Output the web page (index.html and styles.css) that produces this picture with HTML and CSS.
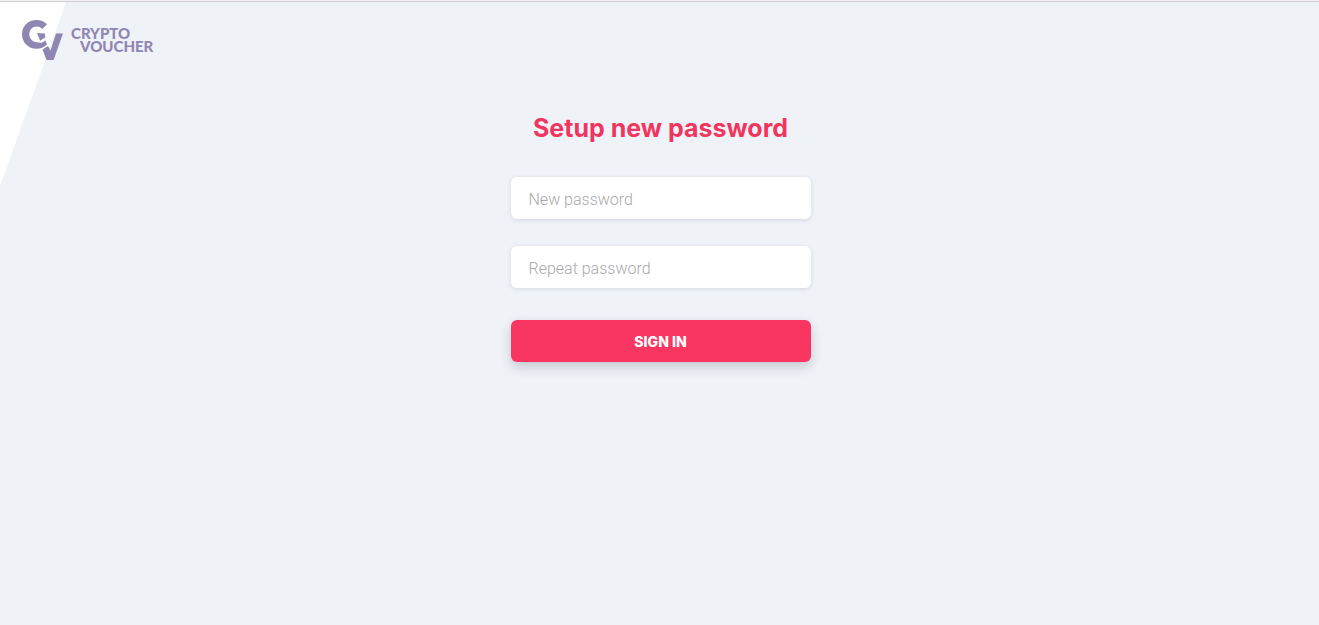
FILE: index.html
```html
<!DOCTYPE html>
<html lang="en">
<head>
<meta charset="utf-8">
<title>Crypto Voucher</title>
<meta name="viewport" content="width=device-width, initial-scale=1">
<link rel="stylesheet" href="styles.css">
</head>
<body>
<header class="header">
  <a class="brand" href="#" aria-label="Crypto Voucher">
    <svg class="brand-mark" viewBox="0 0 42 42" aria-hidden="true">
      <path d="M25 4.200C22.400 1.500 18.800 0 14.500 0C6.200 0 0 6 0 14.300C0 22.600 6.200 28.800 14.300 28.800C18.500 28.800 22.200 27.300 25 24.500L23.300 20.300L20.500 22.500C18.800 22.900 17 22.700 15 22.300C10.500 21.800 7.300 18.700 7.300 14.300C7.300 9.700 10.400 6.500 14.700 6.500C17 6.500 18.800 7.300 20.300 9Z"/>
      <path d="M15 13L22.800 13.500L23.400 17.200L18.200 20.800Z"/>
      <path d="M20.500 29.500L26 26L28.500 30.500L34 13.500H41L31.600 40H24.500Z"/>
    </svg>
    <span class="brand-name"><span>CRYPTO</span><span class="brand-second">VOUCHER</span></span>
  </a>
</header>
<main class="main">
  <form class="form">
    <h1 class="title">Setup new password</h1>
    <input class="field" type="password" placeholder="New password" aria-label="New password">
    <input class="field" type="password" placeholder="Repeat password" aria-label="Repeat password">
    <button class="submit" type="submit">SIGN IN</button>
  </form>
</main>
</body>
</html>
```
FILE: styles.css
```css
* {
  box-sizing: border-box;
}

body {
  margin: 0;
  min-height: 100vh;
  border-top: 1px solid #f3f1f3;
  background: #eff3f8;
  font-family: Inter, "Liberation Sans", sans-serif;
}

.header {
  height: 100px;
  padding: 18px 22px;
  border-top: 1px solid #cfcdd3;
}

.header::before {
  content: "";
  position: absolute;
  z-index: -1;
  top: 2px;
  left: 0;
  width: 66px;
  height: 184px;
  background: #fff;
  clip-path: polygon(0 0, 100% 0, 0 100%);
}

.brand {
  display: inline-flex;
  gap: 7px;
  color: #8f86b2;
  text-decoration: none;
}

.brand-mark {
  width: 42px;
  height: 42px;
  fill: currentColor;
}

.brand-name {
  display: flex;
  flex-direction: column;
  padding-top: 7px;
  font: 900 15px/13px Lato, sans-serif;
}

.brand-second {
  padding-left: 9px;
}

.main {
  display: flex;
  justify-content: center;
  padding: 9px 16px 32px 18px;
}

.form {
  display: flex;
  flex-direction: column;
  width: 300px;
}

.title {
  margin: 0 0 31px;
  color: #f0365f;
  font-size: 25px;
  line-height: 36px;
  text-align: center;
  white-space: nowrap;
}

.field {
  height: 42px;
  margin-bottom: 27px;
  padding: 3px 18px 0;
  border: 0;
  border-radius: 6px;
  background: #fff;
  box-shadow: 0 1px 4px rgba(40, 50, 80, 0.14);
  font: 300 16px Roboto, sans-serif;
}

.field::placeholder {
  color: #a8a8ab;
}

.submit {
  height: 42px;
  margin-top: 5px;
  border: 0;
  border-radius: 6px;
  background: #f93562;
  box-shadow: 0 5px 12px rgba(30, 35, 50, 0.2);
  color: #fff;
  font: 800 14px Inter, sans-serif;
}
```
